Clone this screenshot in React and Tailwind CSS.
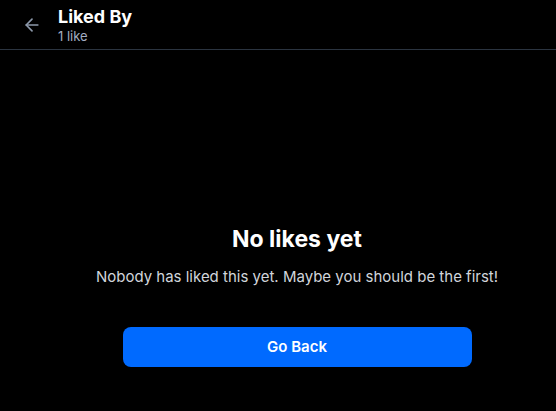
import React from 'react';

const App = () => {
  return (
    <div className="min-h-[411px] w-full bg-black text-white" style={{ fontFamily: 'Inter, "Noto Sans", sans-serif' }}>
      <header className="flex h-[50px] items-center border-b border-[#2b3440] px-[22px]">
        <button className="mr-[16px] flex h-[20px] w-[20px] items-center justify-center text-[#8d99ab]">
          <svg width="20" height="20" viewBox="0 0 24 24" fill="none" stroke="currentColor" strokeWidth="2" strokeLinecap="round" strokeLinejoin="round">
            <path d="M19 12H5" />
            <path d="M12 19l-7-7 7-7" />
          </svg>
        </button>
        <div className="flex flex-col">
          <h1 className="text-[18px] font-bold leading-[22px]">Liked By</h1>
          <p className="text-[13px] leading-[16px] text-[#a3aec2]">1 like</p>
        </div>
      </header>

      <main className="flex flex-col items-center pl-[38px] pt-[174px]">
        <h2 className="text-[23px] font-bold leading-[30px]">No likes yet</h2>
        <p className="mt-[12px] text-[15px] leading-[22px] text-[#d1d5db]">Nobody has liked this yet. Maybe you should be the first!</p>
        <button className="mt-[39px] h-[40px] w-[349px] rounded-lg bg-[#006aff] text-[15px] font-semibold text-white">Go Back</button>
      </main>
    </div>
  );
};

export default App;
